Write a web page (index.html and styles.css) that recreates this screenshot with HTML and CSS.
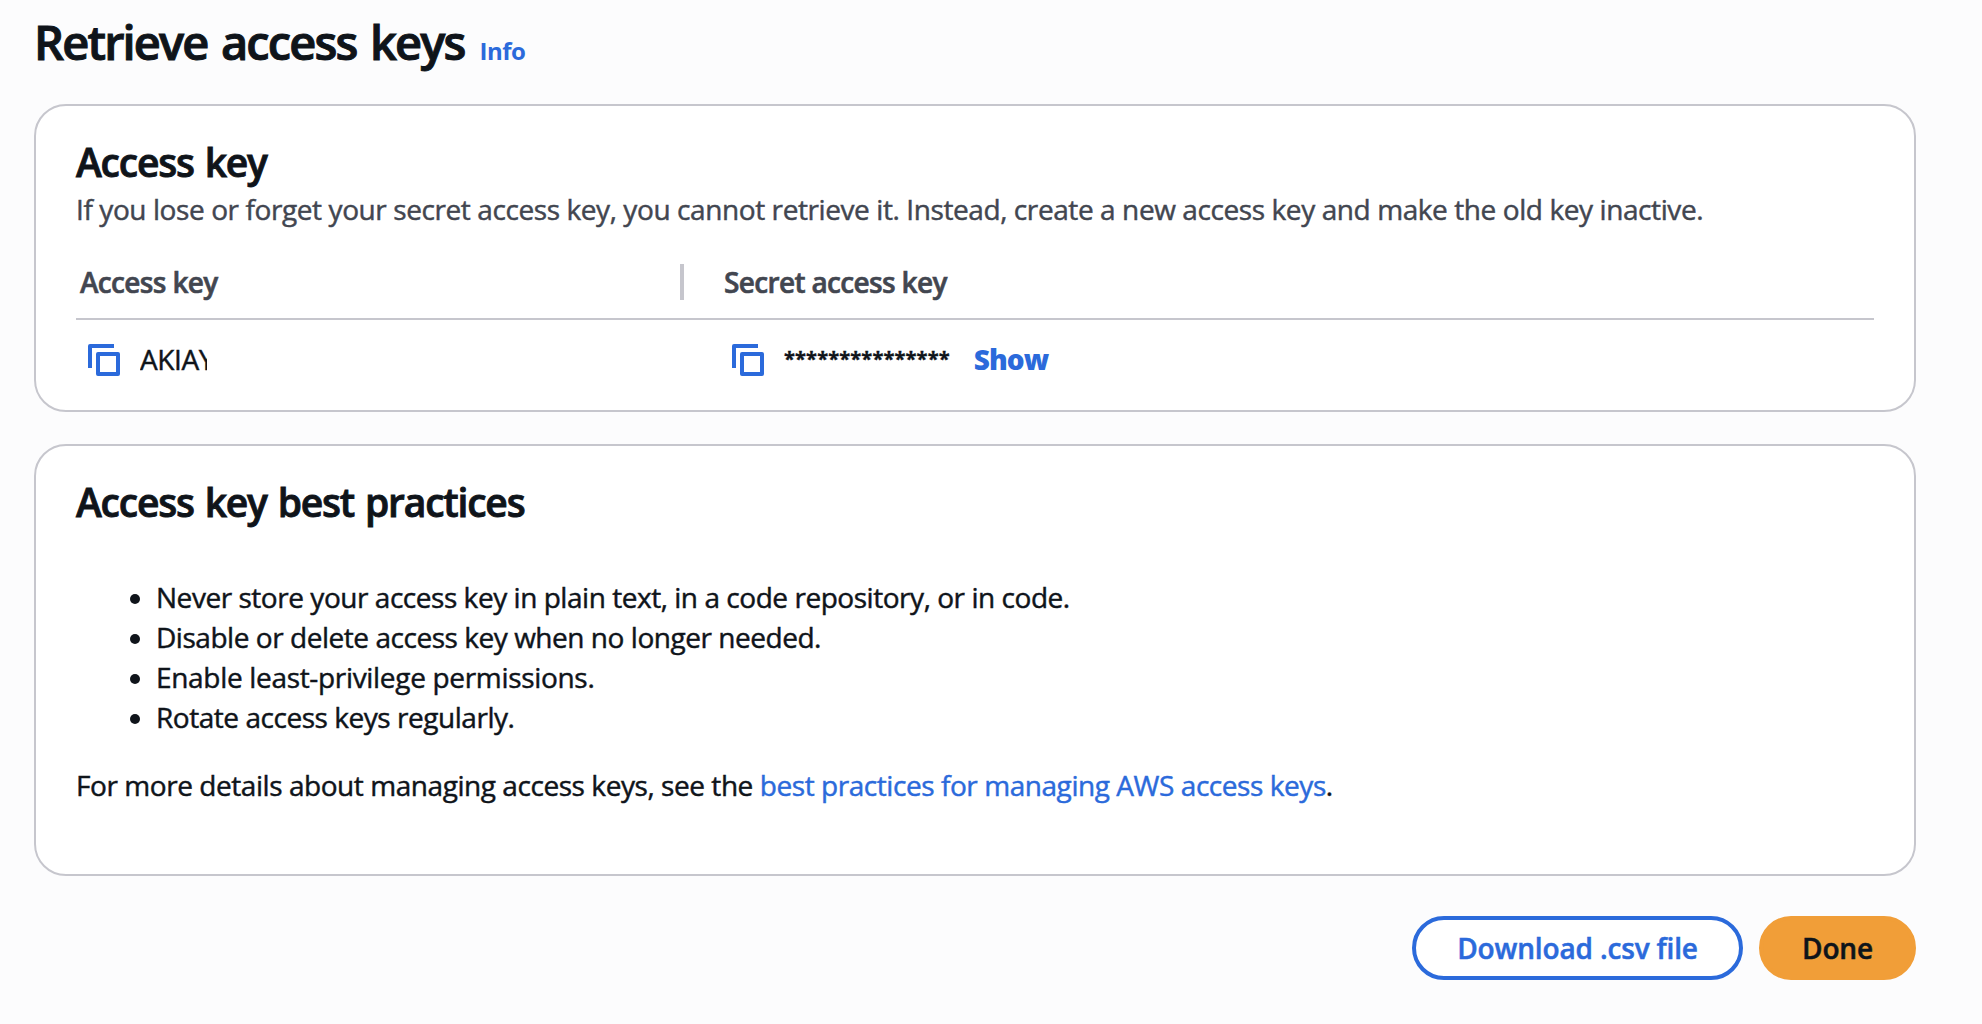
FILE: index.html
```html
<!DOCTYPE html>
<html lang="en">
<head>
<meta charset="utf-8">
<title>Retrieve access keys</title>
<link rel="stylesheet" href="styles.css">
</head>
<body>
<main class="page">
  <header class="page-header">
    <h1>Retrieve access keys</h1>
    <a class="info">Info</a>
  </header>

  <section class="card card-key">
    <h2>Access key</h2>
    <p class="description">If you lose or forget your secret access key, you cannot retrieve it. Instead, create a new access key and make the old key inactive.</p>
    <div class="row row-head">
      <div class="head-cell">Access key</div>
      <div class="head-cell">Secret access key</div>
    </div>
    <div class="row row-body">
      <div class="cell">
        <svg class="copy" viewBox="0 0 32 32" fill="none" stroke="currentColor" stroke-width="4" stroke-linejoin="round"><path d="M26 2H2V24"/><rect x="10" y="10" width="20" height="20"/></svg>
        <span class="key-id">AKIAY</span>
      </div>
      <div class="cell">
        <svg class="copy" viewBox="0 0 32 32" fill="none" stroke="currentColor" stroke-width="4" stroke-linejoin="round"><path d="M26 2H2V24"/><rect x="10" y="10" width="20" height="20"/></svg>
        <span class="secret">***************</span>
        <a class="show">Show</a>
      </div>
    </div>
  </section>

  <section class="card card-practices">
    <h2>Access key best practices</h2>
    <ul>
      <li>Never store your access key in plain text, in a code repository, or in code.</li>
      <li>Disable or delete access key when no longer needed.</li>
      <li class="loose">Enable least-privilege permissions.</li>
      <li>Rotate access keys regularly.</li>
    </ul>
    <p class="more">For more details about managing access keys, see the <a>best practices for managing AWS access keys</a>.</p>
  </section>

  <footer class="actions">
    <button class="btn btn-normal">Download .csv file</button>
    <button class="btn btn-primary">Done</button>
  </footer>
</main>
</body>
</html>
```
FILE: styles.css
```css
* { box-sizing: border-box; }

body {
  margin: 0;
  background: #fcfcfd;
  color: #0f141a;
  font: 400 28px/40px "Open Sans", "Noto Sans", sans-serif;
  letter-spacing: -0.41px;
}

h1, h2, p, ul { margin: 0; padding: 0; }
a { color: #2b6adb; }

.page { padding: 0 66px 0 34px; }

.page-header {
  display: flex;
  align-items: baseline;
  gap: 15px;
  height: 104px;
  padding: 12px 0 0;
}
h1 {
  font-size: 47px;
  line-height: 60px;
  font-weight: 600;
  letter-spacing: -1.85px;
  word-spacing: 3px;
  -webkit-text-stroke: 1px currentColor;
}
.info {
  font-size: 24px;
  font-weight: 700;
  letter-spacing: -0.5px;
}

.card {
  background: #fff;
  border: 2px solid #c6c6cd;
  border-radius: 32px;
  padding: 32px 40px 0;
}
.card-key { height: 308px; }
.card-practices { height: 432px; margin-top: 32px; }

h2 {
  font-size: 39px;
  line-height: 48px;
  font-weight: 600;
  letter-spacing: -1.2px;
  word-spacing: 2px;
  -webkit-text-stroke: 0.9px currentColor;
}

.description, .more, li, .key-id { -webkit-text-stroke: 0.45px currentColor; }

.description {
  margin-top: 3px;
  color: #424650;
  white-space: nowrap;
}

.row {
  display: grid;
  grid-template-columns: 608px 1fr;
  width: 1798px;
}
.row-head {
  height: 91px;
  padding-top: 32px;
  border-bottom: 2px solid #c6c6cd;
  color: #424650;
  font-weight: 600;
  letter-spacing: -0.65px;
  -webkit-text-stroke: 0.6px currentColor;
}
.head-cell { padding: 1px 0 0 4px; }
.head-cell + .head-cell { padding-left: 40px; }
.head-cell:first-child {
  height: 36px;
  margin-top: 3px;
  line-height: 34px;
  border-right: 4px solid #c6c6cd;
}

.row-body { padding-top: 19px; }
.cell {
  display: flex;
  align-items: center;
  height: 40px;
  padding-left: 12px;
}
.cell + .cell { padding-left: 48px; }
.copy {
  width: 32px;
  height: 32px;
  margin-top: 2px;
  color: #2b6adb;
}
.key-id {
  width: 67px;
  margin-left: 20px;
  overflow: hidden;
}
.secret {
  margin: -1px 0 0 20px;
  font-size: 20px;
  font-weight: 700;
  letter-spacing: 0.15px;
  -webkit-text-stroke: 0.4px currentColor;
}
.show {
  margin-left: 24px;
  font-weight: 800;
  letter-spacing: -0.9px;
}

ul {
  margin-top: 51px;
  padding-left: 54px;
  list-style: none;
}
li {
  display: flex;
  letter-spacing: -0.46px;
}
li.loose { letter-spacing: -0.32px; }
li::before {
  content: "";
  width: 10px;
  height: 10px;
  margin: 17px 16px 0 0;
  border-radius: 50%;
  background: #0f141a;
}
.more {
  margin-top: 28px;
  letter-spacing: -0.44px;
}

.actions {
  display: flex;
  justify-content: flex-end;
  gap: 16px;
  margin-top: 40px;
}
.btn {
  height: 64px;
  padding: 0;
  border: 4px solid;
  border-radius: 32px;
  font: 600 28px/40px "Open Sans", "Noto Sans", sans-serif;
  letter-spacing: -0.15px;
  -webkit-text-stroke: 0.5px currentColor;
}
.btn-normal {
  width: 331px;
  color: #2b6adb;
  border-color: #2b6adb;
  background: #fff;
}
.btn-primary {
  width: 157px;
  color: #0f141a;
  border-color: #f19e38;
  background: #f19e38;
}
```
